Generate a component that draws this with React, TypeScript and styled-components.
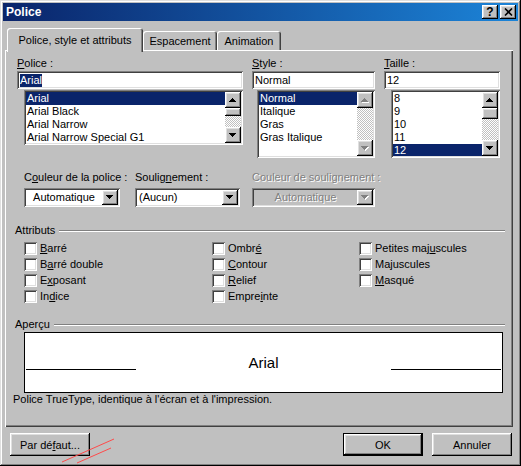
import React from 'react';
import styled, { createGlobalStyle, css } from 'styled-components';

const FACE = '#c0c0c0';
const NAVY = '#0a246a';

const GlobalStyle = createGlobalStyle`
  html, body {
    margin: 0;
    padding: 0;
    background: ${FACE};
  }
  body {
    font-family: "Liberation Sans", Arial, sans-serif;
    font-size: 11px;
    color: #000;
  }
  * {
    box-sizing: border-box;
  }
`;

const raised = css`
  box-shadow: inset -1px -1px #000, inset 1px 1px #fff, inset -2px -2px #808080, inset 2px 2px #dfdfdf;
`;

const sunken = css`
  box-shadow: inset 1px 1px #808080, inset -1px -1px #fff, inset 2px 2px #404040, inset -2px -2px #dfdfdf;
`;

const Window = styled.div`
  position: relative;
  width: 521px;
  height: 466px;
  padding: 3px;
  background: ${FACE};
  box-shadow: inset -1px -1px #000, inset 1px 1px #dfdfdf, inset -2px -2px #808080, inset 2px 2px #fff;
  display: flex;
  flex-direction: column;
`;

const TitleBar = styled.div`
  height: 18px;
  padding: 0 2px 0 3px;
  background: linear-gradient(to right, ${NAVY}, #1c84d8);
  display: flex;
  align-items: center;
  justify-content: space-between;
`;

const TitleText = styled.span`
  color: #fff;
  font-size: 12px;
  font-weight: bold;
`;

const CaptionGroup = styled.div`
  display: flex;
  gap: 2px;
`;

const CaptionButton = styled.div`
  width: 16px;
  height: 14px;
  background: ${FACE};
  ${raised};
  display: flex;
  align-items: center;
  justify-content: center;
  font-size: 12px;
  font-weight: bold;
  line-height: 14px;
`;

const TabRow = styled.div`
  position: relative;
  z-index: 1;
  height: 22px;
  margin-top: 7px;
  padding-left: 4px;
  display: flex;
  align-items: flex-end;
`;

const Tab = styled.div<{ $active?: boolean; $w: number }>`
  width: ${({ $w }) => $w}px;
  height: ${({ $active }) => ($active ? 24 : 19)}px;
  margin-bottom: ${({ $active }) => ($active ? -2 : 0)}px;
  padding-top: ${({ $active }) => ($active ? 0 : 1)}px;
  background: ${FACE};
  border-radius: 3px 3px 0 0;
  box-shadow: inset 1px 1px #fff, inset -1px 0 #404040, inset -2px 0 #808080;
  display: flex;
  align-items: center;
  justify-content: center;
  white-space: nowrap;
`;

const Panel = styled.div`
  height: 377px;
  margin: 0 5px 0 2px;
  padding-top: 7px;
  background: ${FACE};
  box-shadow: inset 1px 1px #fff, inset -1px -1px #404040, inset -2px -2px #808080;
  display: flex;
  flex-direction: column;
`;

const FontGrid = styled.div`
  display: grid;
  grid-template-columns: 226px 123px 116px;
  column-gap: 9px;
  padding-left: 12px;
  align-items: start;
`;

const Field = styled.div`
  display: flex;
  flex-direction: column;
`;

const FieldLabel = styled.div<{ $disabled?: boolean }>`
  height: 13px;
  line-height: 13px;
  margin-bottom: 1px;
  white-space: nowrap;
  color: ${({ $disabled }) => ($disabled ? '#808080' : '#000')};
  text-shadow: ${({ $disabled }) => ($disabled ? '1px 1px #fff' : 'none')};
`;

const TextInput = styled.div`
  height: 18px;
  padding: 2px 3px;
  background: #fff;
  ${sunken};
  display: flex;
  align-items: center;
  line-height: 13px;
`;

const Selection = styled.span`
  background: ${NAVY};
  color: #fff;
`;

const ListBox = styled.div<{ $ml: number; $h: number }>`
  height: ${({ $h }) => $h}px;
  margin: 1px 0 0 ${({ $ml }) => $ml}px;
  padding: 2px;
  background: #fff;
  ${sunken};
  display: flex;
`;

const ListItems = styled.div`
  flex: 1;
  overflow: hidden;
`;

const ListItem = styled.div<{ $sel?: boolean }>`
  height: 13px;
  line-height: 13px;
  padding-left: 1px;
  white-space: nowrap;
  background: ${({ $sel }) => ($sel ? NAVY : 'transparent')};
  color: ${({ $sel }) => ($sel ? '#fff' : '#000')};
`;

const ScrollColumn = styled.div`
  width: 16px;
  display: flex;
  flex-direction: column;
`;

const ScrollButton = styled.div`
  height: 16px;
  background: ${FACE};
  ${raised};
  display: flex;
  align-items: center;
  justify-content: center;
`;

const Track = styled.div`
  flex: 1;
  background-color: #fff;
  background-image: conic-gradient(${FACE} 25%, #fff 0 50%, ${FACE} 0 75%, #fff 0);
  background-size: 2px 2px;
`;

const Thumb = styled.div<{ $h: number }>`
  height: ${({ $h }) => $h}px;
  background: ${FACE};
  ${raised};
`;

const ComboRow = styled.div`
  display: flex;
  margin-top: 13px;
  padding-left: 19px;
`;

const ComboField = styled.div<{ $w: number; $ml?: number }>`
  width: ${({ $w }) => $w}px;
  margin-left: ${({ $ml }) => $ml ?? 0}px;
  display: flex;
  flex-direction: column;
`;

const Combo = styled.div<{ $disabled?: boolean }>`
  height: 19px;
  margin-top: 3px;
  padding: 2px;
  background: ${({ $disabled }) => ($disabled ? FACE : '#fff')};
  ${sunken};
  display: flex;
`;

const ComboText = styled.div<{ $center?: boolean; $disabled?: boolean }>`
  flex: 1;
  padding: 0 2px;
  line-height: 15px;
  white-space: nowrap;
  text-align: ${({ $center }) => ($center ? 'center' : 'left')};
  color: ${({ $disabled }) => ($disabled ? '#808080' : '#000')};
  text-shadow: ${({ $disabled }) => ($disabled ? '1px 1px #fff' : 'none')};
`;

const DropButton = styled.div`
  width: 16px;
  background: ${FACE};
  ${raised};
  display: flex;
  align-items: center;
  justify-content: center;
`;

const GroupHeader = styled.div<{ $mt: number }>`
  height: 13px;
  margin-top: ${({ $mt }) => $mt}px;
  padding: 0 8px 0 10px;
  display: flex;
  align-items: center;
`;

const GroupTitle = styled.span`
  line-height: 13px;
`;

const GroupLine = styled.div`
  flex: 1;
  height: 2px;
  margin-left: 4px;
  border-top: 1px solid #808080;
  border-bottom: 1px solid #fff;
`;

const CheckGrid = styled.div`
  display: grid;
  grid-template-columns: 188px 147px 1fr;
  grid-template-rows: repeat(4, 16px);
  grid-auto-flow: column;
  margin-top: 5px;
  padding-left: 19px;
`;

const CheckItem = styled.div`
  display: flex;
  align-items: flex-start;
  gap: 3px;
  line-height: 13px;
  white-space: nowrap;
`;

const CheckBox = styled.div`
  width: 13px;
  height: 13px;
  flex-shrink: 0;
  background: #fff;
  ${sunken};
`;

const PreviewBox = styled.div`
  width: 479px;
  height: 61px;
  margin: 1px 0 0 19px;
  padding: 0 1px;
  background: #fff;
  border: 1px solid #000;
  display: flex;
  align-items: center;
`;

const PreviewRule = styled.div`
  width: 110px;
  height: 1px;
  margin-top: 13px;
  background: #000;
`;

const PreviewText = styled.div`
  flex: 1;
  text-align: center;
  font-size: 15px;
`;

const Note = styled.div`
  height: 13px;
  line-height: 13px;
  padding-left: 8px;
`;

const ButtonRow = styled.div`
  height: 23px;
  margin-top: 6px;
  padding: 0 6px 0 7px;
  display: flex;
  gap: 9px;
`;

const PushButton = styled.div<{ $default?: boolean }>`
  width: 80px;
  height: 23px;
  background: ${FACE};
  border: ${({ $default }) => ($default ? '1px solid #000' : 'none')};
  ${raised};
  display: flex;
  align-items: center;
  justify-content: center;
  white-space: nowrap;
`;

const Spacer = styled.div`
  flex: 1;
`;

const Annotation = styled.svg`
  position: absolute;
  left: 0;
  top: 0;
  pointer-events: none;
`;

const UP = 'M3 0h1v1h-1z M2 1h3v1h-3z M1 2h5v1h-5z M0 3h7v1h-7z';
const DOWN = 'M0 0h7v1h-7z M1 1h5v1h-5z M2 2h3v1h-3z M3 3h1v1h-1z';

const Arrow = ({ dir, disabled }: { dir: 'up' | 'down'; disabled?: boolean }) => {
  const d = dir === 'up' ? UP : DOWN;
  return (
    <svg width="8" height="5" viewBox="0 0 8 5" shapeRendering="crispEdges">
      {disabled && <path d={d} fill="#fff" transform="translate(1 1)" />}
      <path d={d} fill={disabled ? '#808080' : '#000'} />
    </svg>
  );
};

const ScrollBar = ({ thumb, disabled }: { thumb?: number; disabled?: boolean }) => (
  <ScrollColumn>
    <ScrollButton>
      <Arrow dir="up" disabled={disabled} />
    </ScrollButton>
    <Track>{thumb ? <Thumb $h={thumb} /> : null}</Track>
    <ScrollButton>
      <Arrow dir="down" disabled={disabled} />
    </ScrollButton>
  </ScrollColumn>
);

const fonts = ['Arial', 'Arial Black', 'Arial Narrow', 'Arial Narrow Special G1'];
const styles = ['Normal', 'Italique', 'Gras', 'Gras Italique'];
const sizes = ['8', '9', '10', '11', '12'];

// label split as [before, mnemonic, after]
const attributes: [string, string, string][] = [
  ['', 'B', 'arré'],
  ['B', 'a', 'rré double'],
  ['E', 'x', 'posant'],
  ['In', 'd', 'ice'],
  ['Ombr', 'é', ''],
  ['', 'C', 'ontour'],
  ['', 'R', 'elief'],
  ['Empre', 'i', 'nte'],
  ['Petites maj', 'u', 'scules'],
  ['Ma', 'j', 'uscules'],
  ['', 'M', 'asqué'],
];

export default function App() {
  return (
    <>
      <GlobalStyle />
      <Window>
        <TitleBar>
          <TitleText>Police</TitleText>
          <CaptionGroup>
            <CaptionButton>?</CaptionButton>
            <CaptionButton>
              <svg width="9" height="8" viewBox="0 0 9 8">
                <path d="M1 0.5 L8 7.5 M8 0.5 L1 7.5" stroke="#000" strokeWidth="1.6" />
              </svg>
            </CaptionButton>
          </CaptionGroup>
        </TitleBar>

        <TabRow>
          <Tab $active $w={136}>Police, style et attributs</Tab>
          <Tab $w={74}>Espacement</Tab>
          <Tab $w={64}>Animation</Tab>
        </TabRow>

        <Panel>
          <FontGrid>
            <Field>
              <FieldLabel><u>P</u>olice :</FieldLabel>
              <TextInput><Selection>Arial</Selection></TextInput>
              <ListBox $ml={7} $h={55}>
                <ListItems>
                  {fonts.map((f, i) => (
                    <ListItem key={f} $sel={i === 0}>{f}</ListItem>
                  ))}
                </ListItems>
                <ScrollBar thumb={8} />
              </ListBox>
            </Field>
            <Field>
              <FieldLabel><u>S</u>tyle :</FieldLabel>
              <TextInput>Normal</TextInput>
              <ListBox $ml={5} $h={68}>
                <ListItems>
                  {styles.map((s, i) => (
                    <ListItem key={s} $sel={i === 0}>{s}</ListItem>
                  ))}
                </ListItems>
                <ScrollBar disabled />
              </ListBox>
            </Field>
            <Field>
              <FieldLabel><u>T</u>aille :</FieldLabel>
              <TextInput>12</TextInput>
              <ListBox $ml={7} $h={68}>
                <ListItems>
                  {sizes.map((s) => (
                    <ListItem key={s} $sel={s === '12'}>{s}</ListItem>
                  ))}
                </ListItems>
                <ScrollBar thumb={11} />
              </ListBox>
            </Field>
          </FontGrid>

          <ComboRow>
            <ComboField $w={96}>
              <FieldLabel>C<u>o</u>uleur de la police :</FieldLabel>
              <Combo>
                <ComboText $center>Automatique</ComboText>
                <DropButton><Arrow dir="down" /></DropButton>
              </Combo>
            </ComboField>
            <ComboField $w={105} $ml={15}>
              <FieldLabel>Soulig<u>n</u>ement :</FieldLabel>
              <Combo>
                <ComboText>(Aucun)</ComboText>
                <DropButton><Arrow dir="down" /></DropButton>
              </Combo>
            </ComboField>
            <ComboField $w={123} $ml={12}>
              <FieldLabel $disabled>Couleur de soulignement :</FieldLabel>
              <Combo $disabled>
                <ComboText $center $disabled>Automatique</ComboText>
                <DropButton><Arrow dir="down" disabled /></DropButton>
              </Combo>
            </ComboField>
          </ComboRow>

          <GroupHeader $mt={17}>
            <GroupTitle>Attributs</GroupTitle>
            <GroupLine />
          </GroupHeader>
          <CheckGrid>
            {attributes.map(([a, m, b]) => (
              <CheckItem key={a + m + b}>
                <CheckBox />
                <span>{a}<u>{m}</u>{b}</span>
              </CheckItem>
            ))}
          </CheckGrid>

          <GroupHeader $mt={12}>
            <GroupTitle>Aperçu</GroupTitle>
            <GroupLine />
          </GroupHeader>
          <PreviewBox>
            <PreviewRule />
            <PreviewText>Arial</PreviewText>
            <PreviewRule />
          </PreviewBox>
          <Note>Police TrueType, identique à l'écran et à l'impression.</Note>
        </Panel>

        <ButtonRow>
          <PushButton>Par dé<u>f</u>aut...</PushButton>
          <Spacer />
          <PushButton $default>OK</PushButton>
          <PushButton>Annuler</PushButton>
        </ButtonRow>

        <Annotation width="521" height="466" viewBox="0 0 521 466">
          <path d="M62 462 L114 439 M77 463 L111 448" stroke="#ff4a4a" strokeWidth="1" fill="none" />
        </Annotation>
      </Window>
    </>
  );
}
